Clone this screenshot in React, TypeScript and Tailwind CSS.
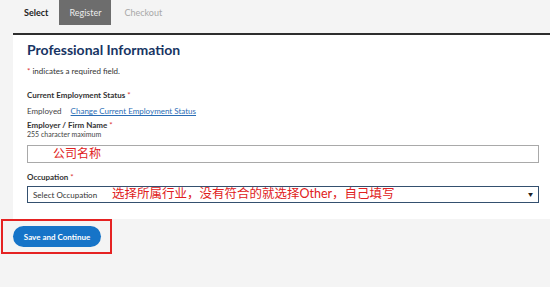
import React from "react";

export default function App() {
  return (
    <div className="w-[550px] h-[287px] bg-[#f4f4f4] overflow-hidden" style={{ fontFamily: "Lato, 'Noto Sans CJK SC', sans-serif" }}>
      {/* Tabs */}
      <div className="flex h-[33px] items-start pl-[24px]">
        <div className="h-[25px] flex items-center text-[9px] font-bold text-[#222] pr-[11px]">Select</div>
        <div className="h-[25px] w-[52px] flex items-center justify-center bg-[#6d6d6d] text-[9px] text-[#ececec]">Register</div>
        <div className="h-[25px] flex items-center text-[9px] text-[#a8a8a8] pl-[13px]">Checkout</div>
      </div>
      {/* Panel */}
      <div className="ml-[13px] border-t-2 border-[#2e2e2e] bg-white h-[186px] pl-[14px] pr-[11px]">
        <h1 className="text-[14px] font-bold text-[#173463] mt-[5px] leading-[20px]">Professional Information</h1>
        <div className="text-[8px] text-[#333] mt-[6px] leading-[10px]"><span className="text-[#d33]">*</span> indicates a required field.</div>
        <div className="text-[8px] font-bold text-[#333] mt-[13px] leading-[12px]">Current Employment Status <span className="text-[#d33] font-normal">*</span></div>
        <div className="flex gap-[9px] text-[8px] leading-[12px] mt-[4px]">
          <span className="text-[#444]">Employed</span>
          <span className="text-[#2a6db5] underline">Change Current Employment Status</span>
        </div>
        <div className="text-[8px] font-bold text-[#333] mt-[3px] leading-[10px]">Employer / Firm Name <span className="text-[#d33] font-normal">*</span></div>
        <div className="text-[7px] text-[#444] leading-[9px]">255 character maximum</div>
        <div className="mt-[6px] h-[18px] border border-[#a9a9a9] flex items-center pl-[25px] text-[12px] text-[#e02020]">公司名称</div>
        <div className="text-[8px] font-bold text-[#333] mt-[8px] leading-[12px]">Occupation <span className="text-[#d33] font-normal">*</span></div>
        <div className="mt-[3px] h-[17px] border border-[#34506f] flex items-center pl-[5px] pr-[5px]">
          <span className="text-[8px] text-[#333] w-[79px]">Select Occupation</span>
          <span className="text-[12.5px] text-[#e02020] flex-1">选择所属行业，没有符合的就选择Other，自己填写</span>
          <span className="text-[5px] text-[#222]">▼</span>
        </div>
      </div>
      {/* Button area */}
      <div className="ml-[1px] w-[111px] h-[35px] border-2 border-[#e52222] flex items-center pl-[10px]">
        <button className="h-[21px] w-[88px] rounded-full bg-[#1674c8] text-white text-[8px] font-bold">Save and Continue</button>
      </div>
    </div>
  );
}
